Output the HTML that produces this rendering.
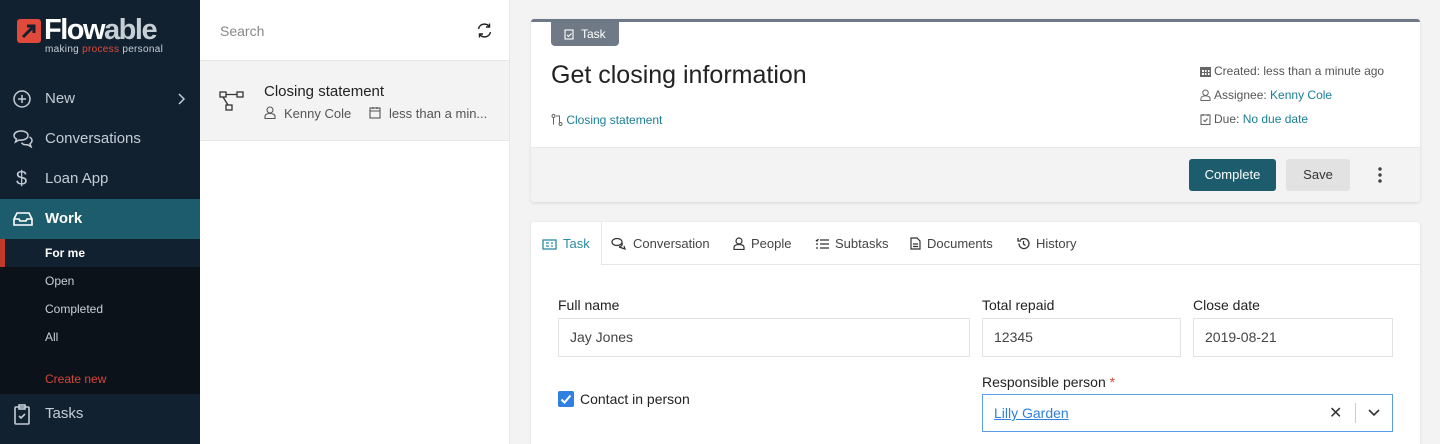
<!DOCTYPE html>
<html><head><meta charset="utf-8"><style>
*{box-sizing:border-box;margin:0;padding:0}
html,body{width:1440px;height:444px;overflow:hidden}
body{background:#f3f3f3;font-family:"Liberation Sans",sans-serif;position:relative}
.abs{position:absolute}
#side{left:0;top:0;width:200px;height:444px;background:#122130}
.nav{position:absolute;left:0;width:200px;height:40px;color:#c4ccd4;font-size:15px;line-height:40px;padding-left:45px}
.nav svg{position:absolute;left:12px;top:10px}
.sub{position:absolute;left:0;width:200px;height:28px;font-size:12px;line-height:28px;padding-left:45px;color:#c9cfd6}
#mid{left:200px;top:0;width:310px;height:444px;background:#fff;border-right:1px solid #e6e6e6}
.card{background:#fff;border-radius:3px;box-shadow:0 1px 3px rgba(0,0,0,.12)}
.lbl{font-size:14px;color:#222}
.inp{position:absolute;height:39px;border:1px solid #e2e2e2;background:#fff;font-size:14px;color:#444;line-height:37px;padding-left:11px}
.link{color:#1b7f96}
.meta{font-size:12px;color:#555}
.meta svg{vertical-align:-2px;margin-right:3px}
.tab{position:absolute;top:222px;height:43px;line-height:43px;font-size:13px;color:#444}
.tab svg{vertical-align:-2px;margin-right:6px}
</style></head><body>
<div id="side" class="abs">
 <svg class="abs" style="left:16px;top:18px" width="26" height="26" viewBox="0 0 26 26"><rect x="1" y="1" width="24" height="24" rx="3" fill="#e04a3a"/><path d="M7 19 L18 8 M11 8 H18 V15" stroke="#122130" stroke-width="3" fill="none"/></svg>
 <div class="abs" style="left:44px;top:14px;font-size:29px;font-weight:bold;color:#fff;letter-spacing:-1.5px;line-height:32px">Flow<span style="color:#c7cfd6">able</span></div>
 <div class="abs" style="left:45px;top:44px;font-size:10px;color:#c7cfd6;letter-spacing:.3px">making <span style="color:#e04a3a">process</span> personal</div>
 <div class="nav" style="top:79px"><svg width="20" height="20" viewBox="0 0 20 20" fill="none" stroke="#c4ccd4" stroke-width="1.5"><circle cx="10" cy="10" r="8"/><path d="M10 6v8M6 10h8"/></svg>New<svg style="left:178px;top:14px" width="8" height="12" viewBox="0 0 8 12" fill="none" stroke="#c4ccd4" stroke-width="1.5"><path d="M1 1l5 5-5 5"/></svg></div>
 <div class="nav" style="top:119px"><svg width="22" height="20" viewBox="0 0 22 20" fill="none" stroke="#c4ccd4" stroke-width="1.5"><path d="M9 2c-4 0-7 2-7 4.5 0 1.5 1 2.7 2.5 3.5L3.5 13 7 11c.6.1 1.3.1 2 .1 4 0 7-2 7-4.6S13 2 9 2z"/><path d="M17.5 8c1.5.8 2.5 2 2.5 3.5 0 1.3-.8 2.4-2 3.2l1 3-3.5-2c-2.5.3-5-.5-6-2"/></svg>Conversations</div>
 <div class="nav" style="top:159px"><span style="position:absolute;left:16px;font-size:20px">$</span>Loan App</div>
 <div class="nav" style="top:199px;background:#1d5c6c;color:#fff;font-weight:bold"><svg width="22" height="20" viewBox="0 0 22 20" fill="none" stroke="#fff" stroke-width="1.6"><path d="M2 10l3-6h12l3 6v6H2z M2 10h5l1 2h6l1-2h5"/></svg>Work</div>
 <div class="abs" style="left:0;top:239px;width:200px;height:155px;background:#0b121a"></div>
 <div class="sub" style="top:239px;background:#122130;color:#fff;font-weight:bold"><span style="position:absolute;left:0;top:0;width:5px;height:28px;background:#c0392b"></span>For me</div>
 <div class="sub" style="top:267px">Open</div>
 <div class="sub" style="top:295px">Completed</div>
 <div class="sub" style="top:323px">All</div>
 <div class="sub" style="top:365px;color:#d9453a">Create new</div>
 <div class="nav" style="top:394px"><svg width="20" height="22" viewBox="0 0 20 22" fill="none" stroke="#c4ccd4" stroke-width="1.6"><rect x="3" y="3" width="14" height="17" rx="1"/><rect x="7" y="1" width="6" height="4"/><path d="M7 12l2 2 4-4"/></svg>Tasks</div>
</div>
<div id="mid" class="abs">
 <div class="abs" style="left:20px;top:23px;font-size:14px;color:#888">Search</div>
 <svg class="abs" style="left:276px;top:22px" width="17" height="17" viewBox="0 0 17 17" fill="none" stroke="#222" stroke-width="1.4"><path d="M2.5 7a6 6 0 0 1 11-2M14.5 10a6 6 0 0 1-11 2"/><path d="M13.5 1.5v3.5h-3.5M3.5 15.5v-3.5h3.5"/></svg>
 <div class="abs" style="left:0;top:60px;width:309px;height:81px;background:#f3f3f3;border-top:1px solid #e6e6e6;border-bottom:1px solid #e6e6e6"></div>
 <svg class="abs" style="left:19px;top:90px" width="26" height="22" viewBox="0 0 26 22" fill="none" stroke="#333" stroke-width="1.3"><rect x="1" y="2" width="6" height="5"/><rect x="18" y="2" width="6" height="5"/><rect x="7" y="15" width="6" height="5"/><path d="M7 4.5h11M4 7l5 8"/></svg>
 <div class="abs" style="left:64px;top:83px;font-size:15px;color:#222">Closing statement</div>
 <svg class="abs" style="left:64px;top:106px" width="12" height="13" viewBox="0 0 12 13" fill="none" stroke="#555" stroke-width="1.1"><circle cx="6" cy="4" r="3"/><path d="M1 12.5v-2c0-2 2-3 5-3s5 1 5 3v2z"/></svg>
 <div class="abs meta" style="left:84px;top:106px;font-size:13px">Kenny Cole</div>
 <svg class="abs" style="left:169px;top:106px" width="12" height="13" viewBox="0 0 12 13" fill="none" stroke="#555" stroke-width="1.1"><rect x="1" y="2" width="10" height="10"/><path d="M1 5h10M4 1v2M8 1v2"/></svg>
 <div class="abs meta" style="left:189px;top:106px;font-size:13px">less than a min...</div>
</div>
<div class="abs card" style="left:531px;top:19px;width:889px;height:183px;border-top:3px solid #6d7987;overflow:hidden">
 <div class="abs" style="left:0;top:125px;width:889px;height:58px;background:#f3f3f3;border-top:1px solid #e8e8e8"></div>
</div>
<div class="abs" style="left:551px;top:22px;width:68px;height:24px;background:#6f7a86;border-radius:0 0 4px 4px;color:#fff;font-size:12px;line-height:24px;padding-left:30px">Task</div>
<svg class="abs" style="left:564px;top:28px" width="10" height="12" viewBox="0 0 10 12" fill="none" stroke="#fff" stroke-width="1.1"><rect x="1" y="2" width="8" height="9"/><path d="M3 7l1.5 1.5 3-3"/></svg>
<div class="abs" style="left:551px;top:61px;font-size:25px;color:#222">Get closing information</div>
<div class="abs link" style="left:551px;top:113px;font-size:12px"><svg style="vertical-align:-2px" width="12" height="12" viewBox="0 0 12 12" fill="none" stroke="#666" stroke-width="1"><circle cx="2.5" cy="2" r="1.5"/><circle cx="9.5" cy="10" r="1.5"/><path d="M2.5 3.5v7M5 2h3.5v6.5"/></svg> Closing statement</div>
<div class="abs meta" style="left:1200px;top:64px"><svg width="11" height="12" viewBox="0 0 11 12" fill="#666"><rect x="0" y="2" width="11" height="10"/><path fill="#fff" d="M2 5h2v2H2zM5 5h1.5v2H5zM8 5h1.5v2H8zM2 8h2v2H2zM5 8h1.5v2H5zM8 8h1.5v2H8z"/></svg>Created: less than a minute ago</div>
<div class="abs meta" style="left:1200px;top:88px"><svg width="11" height="12" viewBox="0 0 12 13" fill="none" stroke="#666" stroke-width="1.1"><circle cx="6" cy="4" r="3"/><path d="M1 12.5v-2c0-2 2-3 5-3s5 1 5 3v2z"/></svg>Assignee: <span class="link">Kenny Cole</span></div>
<div class="abs meta" style="left:1200px;top:112px"><svg width="11" height="12" viewBox="0 0 11 12" fill="none" stroke="#666" stroke-width="1.1"><rect x="1" y="2" width="9" height="9.5"/><path d="M3 1v2M8 1v2M3.5 7l1.5 1.5 2.5-3"/></svg>Due: <span class="link">No due date</span></div>
<div class="abs" style="left:1189px;top:159px;width:87px;height:32px;background:#1d5c6c;border-radius:3px;color:#fff;font-size:13px;line-height:32px;text-align:center">Complete</div>
<div class="abs" style="left:1286px;top:159px;width:64px;height:32px;background:#e2e2e2;border-radius:3px;color:#333;font-size:13px;line-height:32px;text-align:center">Save</div>
<div class="abs" style="left:1378px;top:166px;width:4px;height:18px;background:radial-gradient(circle,#444 1.5px,transparent 2px) 0 0/4px 6px"></div>
<div class="abs card" style="left:531px;top:222px;width:889px;height:230px">
 <div class="abs" style="left:0;top:42px;width:889px;height:1px;background:#e6e6e6"></div>
 <div class="abs" style="left:70px;top:0;width:1px;height:43px;background:#e6e6e6"></div>
 <div class="abs" style="left:0;top:42px;width:70px;height:1px;background:#fff"></div>
</div>
<div class="tab" style="left:542px;color:#2a8aa0"><svg width="15" height="11" viewBox="0 0 15 11" fill="none" stroke="#2a8aa0" stroke-width="1.3"><rect x="1" y="1" width="13" height="9"/><path d="M4 4h3M4 7h3M9 4h2M9 7h2"/></svg>Task</div>
<div class="tab" style="left:611px"><svg width="16" height="13" viewBox="0 0 16 13" fill="none" stroke="#333" stroke-width="1.2"><ellipse cx="6" cy="5" rx="5" ry="3.5"/><path d="M11 6a4 3 0 0 1-3 4l6 2-1-3"/></svg>Conversation</div>
<div class="tab" style="left:733px"><svg width="12" height="13" viewBox="0 0 12 13" fill="none" stroke="#333" stroke-width="1.2"><circle cx="6" cy="4" r="3"/><path d="M1 12.5v-2c0-2 2-3 5-3s5 1 5 3v2z"/></svg>People</div>
<div class="tab" style="left:815px"><svg width="14" height="12" viewBox="0 0 14 12" fill="none" stroke="#333" stroke-width="1.3"><path d="M5 2h9M5 6h9M5 10h9M1 2l1 1 1.5-2M1 6h2M1 10h2"/></svg>Subtasks</div>
<div class="tab" style="left:910px"><svg width="11" height="13" viewBox="0 0 11 13" fill="none" stroke="#333" stroke-width="1.2"><path d="M1 1h6l3 3v8H1z M3 7h5M3 9.5h5"/></svg>Documents</div>
<div class="tab" style="left:1017px"><svg width="13" height="13" viewBox="0 0 13 13" fill="none" stroke="#333" stroke-width="1.3"><path d="M2 6.5a5 5 0 1 0 1.5-3.5M1 1v3h3M6.5 4v3l2 1.5"/></svg>History</div>
<div class="abs lbl" style="left:558px;top:297px">Full name</div>
<div class="abs lbl" style="left:982px;top:297px">Total repaid</div>
<div class="abs lbl" style="left:1193px;top:297px">Close date</div>
<div class="inp" style="left:558px;top:318px;width:412px">Jay Jones</div>
<div class="inp" style="left:982px;top:318px;width:199px">12345</div>
<div class="inp" style="left:1193px;top:318px;width:200px">2019-08-21</div>
<div class="abs" style="left:558px;top:391px;width:16px;height:16px;background:#2f80e0;border-radius:2px"></div>
<svg class="abs" style="left:558px;top:391px" width="16" height="16" viewBox="0 0 16 16" fill="none" stroke="#fff" stroke-width="2"><path d="M3.5 8.5l3 3 6-7"/></svg>
<div class="abs lbl" style="left:580px;top:391px">Contact in person</div>
<div class="abs lbl" style="left:982px;top:374px">Responsible person <span style="color:#d9453a">*</span></div>
<div class="inp" style="left:982px;top:394px;width:411px;height:38px;border-color:#5b9ee6"><span style="color:#2f7fe0;text-decoration:underline">Lilly Garden</span>
 <span style="position:absolute;left:346px;top:0;font-size:16px;color:#333">✕</span>
 <span style="position:absolute;left:372px;top:8px;width:1px;height:20px;background:#ccc"></span>
 <svg style="position:absolute;left:385px;top:14px" width="12" height="8" viewBox="0 0 12 8" fill="none" stroke="#333" stroke-width="1.6"><path d="M1 1l5 5 5-5"/></svg></div>
</body></html>
